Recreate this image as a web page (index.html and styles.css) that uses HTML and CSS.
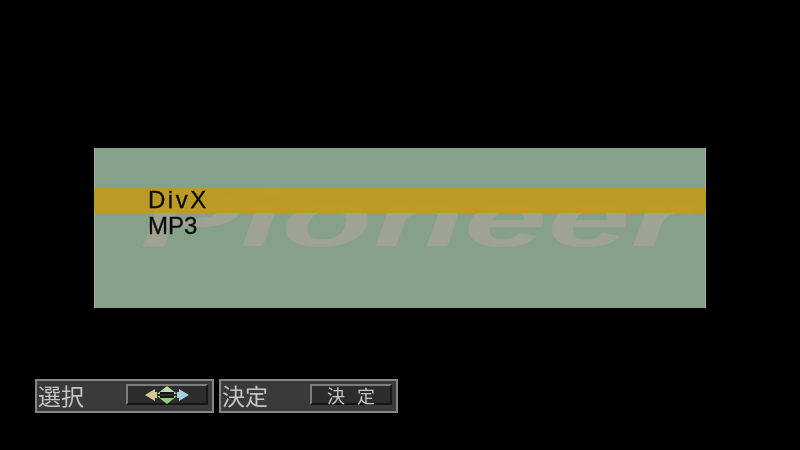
FILE: index.html
```html
<!DOCTYPE html>
<html lang="ja">
<head>
    <meta charset="UTF-8">
    <title>Pioneer DVD Menu</title>
    <link rel="stylesheet" href="styles.css">
</head>
<body>

    <div class="screen">
        <div class="menu">
            <div class="logo">Pioneer</div>
            <div class="menu-item selected">DivX</div>
            <div class="menu-item">MP3</div>
        </div>

        <div class="hints">
            <div class="hint">
                <span class="hint-label">選択</span>
                <span class="hint-key">
                    <svg class="arrows" width="46" height="18" viewBox="0 0 46 18">
                        <path d="M1 9 L11 3 V6 H13 V12 H11 V15 Z" fill="#d4c890"/>
                        <path d="M45 9 L35 3 V6 H33 V12 H35 V15 Z" fill="#a8d0dc"/>
                        <path d="M23 0 L33 8 H13 Z" fill="#b8dca8"/>
                        <path d="M23 18 L33 10 H13 Z" fill="#98cc84"/>
                        <rect x="16" y="6" width="14" height="2" fill="#141414"/>
                        <rect x="16" y="10" width="14" height="2" fill="#141414"/>
                    </svg>
                </span>
            </div>
            <div class="hint">
                <span class="hint-label">決定</span>
                <span class="hint-key key-text"><span>決</span><span>定</span></span>
            </div>
        </div>
    </div>

</body>
</html>
```

FILE: styles.css
```css
html, body {
    margin: 0;
    padding: 0;
    background-color: #000;
}

.screen {
    width: 800px;
    height: 450px;
    padding-top: 148px;
    box-sizing: border-box;
    overflow: hidden;
    font-family: "Liberation Sans", Arial, sans-serif;
    filter: blur(0.5px);
}

.menu {
    position: relative;
    width: 612px;
    height: 160px;
    margin-left: 94px;
    padding-top: 39px;
    box-sizing: border-box;
    background-color: #87a08a;
    box-shadow: inset 1px 0 0 #a0b2a0, inset -1px 0 0 #a0b2a0;
    overflow: hidden;
}

.logo {
    position: absolute;
    left: 46px;
    top: 26px;
    font-size: 80px;
    line-height: 90px;
    font-weight: bold;
    font-style: italic;
    color: #9fa394;
    transform: scaleX(1.87);
    transform-origin: left top;
    white-space: nowrap;
}

.menu-item {
    position: relative;
    height: 26px;
    padding-left: 54px;
    font-size: 24px;
    line-height: 26px;
    color: #0c0c0c;
    -webkit-text-stroke: 0.3px #0c0c0c;
}

.menu-item.selected {
    background-color: rgba(190, 155, 30, 0.93);
    letter-spacing: 2.5px;
}

.hints {
    display: flex;
    gap: 5px;
    margin: 71px 0 0 35px;
}

.hint {
    display: flex;
    align-items: center;
    justify-content: space-between;
    width: 179px;
    height: 34px;
    padding: 0 4px 3px 1px;
    box-sizing: border-box;
    background-color: #3a3a3a;
    border: 2px solid #858585;
    color: #c4c4c8;
    font-family: "Noto Sans CJK JP", sans-serif;
}

.hint-label {
    font-size: 23px;
    line-height: 26px;
}

.hint-key {
    display: flex;
    align-items: center;
    justify-content: center;
    width: 82px;
    height: 21px;
    box-sizing: border-box;
    background-color: #2c2c2c;
    border-top: 2px solid #7c7c7c;
    border-left: 2px solid #7c7c7c;
    border-bottom: 2px solid #161616;
    border-right: 2px solid #161616;
}

.key-text {
    gap: 12px;
    font-size: 18px;
}
```
